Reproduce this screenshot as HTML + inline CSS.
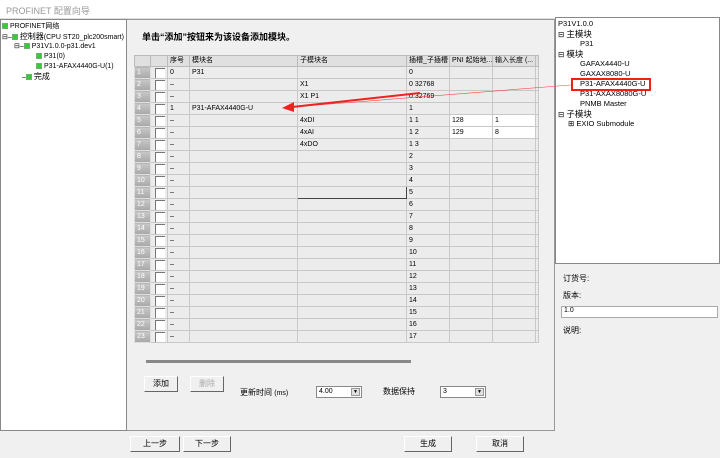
<!DOCTYPE html><html><head><meta charset="utf-8"><style>
*{box-sizing:border-box;margin:0;padding:0}
body{width:720px;height:458px;background:#f0f0f0;font-family:"Liberation Sans","Noto Sans CJK SC",sans-serif;font-size:8px;color:#000;position:relative;overflow:hidden}
.a{position:absolute}
.title{left:0;top:0;width:720px;height:19px;background:#fff;color:#999;font-size:9px;padding:4px 6px;border-bottom:1px solid #ddd}
.lp{left:0;top:19px;width:127px;height:412px;background:#fff;border:1px solid #888}
.rp{left:555px;top:17px;width:165px;height:247px;background:#fff;border:1px solid #888}
.main{left:127px;top:19px;width:428px;height:412px;border:1px solid #999;border-left:none}
.g{display:inline-block;width:6px;height:6px;background:#3c3;border:1px solid #7a7;vertical-align:-1px;margin-right:2px}
table{border-collapse:collapse;table-layout:fixed;position:absolute;left:134px;top:55px;width:404px}
td{height:12px;border:1px solid #c8c8c8;padding:0 2px;font-size:7px;white-space:nowrap;overflow:hidden;background:#ececec;line-height:10px}
tr.h td{height:11px;background:#e0e0e0;border-color:#bbb}
td.rh{background:linear-gradient(#c8c8c8,#a8a8a8);color:#fff;border-color:#ddd}
td.cb span{display:block;width:10px;height:10px;background:#fff;border-left:1px solid #777;border-top:1px solid #777;margin-left:2px}
.btn{background:#f0f0f0;border:1px solid #fff;border-right:1px solid #666;border-bottom:1px solid #666;text-align:center;font-size:8px;line-height:14px;height:16px}
.sel{background:#fff;border:1px solid #888;height:12px;font-size:7px;padding-left:2px;line-height:10px}
.sel b{position:absolute;right:1px;top:1px;width:9px;height:8px;background:#e0e0e0;border:1px solid #999;font-size:5px;text-align:center;line-height:7px}
.t div{white-space:nowrap}
.lp div{font-size:7px;line-height:10px;height:10px}
.rp div{font-size:7.5px;line-height:10px;height:10px}
</style></head><body>
<div class="a title">PROFINET 配置向导</div>
<div class="a lp t" style="padding:2px 1px">
<div><span class="g"></span>PROFINET网络</div>
<div>⊟–<span class="g"></span><span style="font-size:8px">控制器</span>(CPU ST20_plc200smart)</div>
<div style="padding-left:12px">⊟–<span class="g"></span>P31V1.0.0-p31.dev1</div>
<div style="padding-left:34px"><span class="g"></span>P31(0)</div>
<div style="padding-left:34px"><span class="g"></span>P31-AFAX4440G-U(1)</div>
<div style="padding-left:20px">–<span class="g"></span><span style="font-size:8px">完成</span></div>
</div>
<div class="a main"></div>
<div class="a" style="left:142px;top:30px;font-size:9px;font-weight:bold">单击“添加”按钮来为该设备添加模块。</div>
<table>
<colgroup><col style="width:16px"><col style="width:17px"><col style="width:22px"><col style="width:108px"><col style="width:109px"><col style="width:43px"><col style="width:43px"><col style="width:43px"><col style="width:3px"></colgroup>
<tr class="h"><td></td><td></td><td>序号</td><td>模块名</td><td>子模块名</td><td>插槽_子插槽</td><td>PNI 起始地...</td><td>输入长度 (...</td><td></td></tr>
<tr><td class="rh">1</td><td class="cb"><span></span></td><td>0</td><td>P31</td><td></td><td>0</td><td></td><td></td><td></td></tr>
<tr><td class="rh">2</td><td class="cb"><span></span></td><td>–</td><td></td><td>X1</td><td>0 32768</td><td></td><td></td><td></td></tr>
<tr><td class="rh">3</td><td class="cb"><span></span></td><td>–</td><td></td><td>X1 P1</td><td>0 32769</td><td></td><td></td><td></td></tr>
<tr><td class="rh">4</td><td class="cb"><span></span></td><td>1</td><td>P31-AFAX4440G-U</td><td></td><td>1</td><td></td><td></td><td></td></tr>
<tr><td class="rh">5</td><td class="cb"><span></span></td><td>–</td><td></td><td>4xDI</td><td>1 1</td><td style="background:#fff">128</td><td style="background:#fff">1</td><td></td></tr>
<tr><td class="rh">6</td><td class="cb"><span></span></td><td>–</td><td></td><td>4xAI</td><td>1 2</td><td style="background:#fff">129</td><td style="background:#fff">8</td><td></td></tr>
<tr><td class="rh">7</td><td class="cb"><span></span></td><td>–</td><td></td><td>4xDO</td><td>1 3</td><td></td><td></td><td></td></tr>
<tr><td class="rh">8</td><td class="cb"><span></span></td><td>–</td><td></td><td></td><td>2</td><td></td><td></td><td></td></tr>
<tr><td class="rh">9</td><td class="cb"><span></span></td><td>–</td><td></td><td></td><td>3</td><td></td><td></td><td></td></tr>
<tr><td class="rh">10</td><td class="cb"><span></span></td><td>–</td><td></td><td></td><td>4</td><td></td><td></td><td></td></tr>
<tr><td class="rh">11</td><td class="cb"><span></span></td><td>–</td><td></td><td style="border:1px solid #444"></td><td>5</td><td></td><td></td><td></td></tr>
<tr><td class="rh">12</td><td class="cb"><span></span></td><td>–</td><td></td><td></td><td>6</td><td></td><td></td><td></td></tr>
<tr><td class="rh">13</td><td class="cb"><span></span></td><td>–</td><td></td><td></td><td>7</td><td></td><td></td><td></td></tr>
<tr><td class="rh">14</td><td class="cb"><span></span></td><td>–</td><td></td><td></td><td>8</td><td></td><td></td><td></td></tr>
<tr><td class="rh">15</td><td class="cb"><span></span></td><td>–</td><td></td><td></td><td>9</td><td></td><td></td><td></td></tr>
<tr><td class="rh">16</td><td class="cb"><span></span></td><td>–</td><td></td><td></td><td>10</td><td></td><td></td><td></td></tr>
<tr><td class="rh">17</td><td class="cb"><span></span></td><td>–</td><td></td><td></td><td>11</td><td></td><td></td><td></td></tr>
<tr><td class="rh">18</td><td class="cb"><span></span></td><td>–</td><td></td><td></td><td>12</td><td></td><td></td><td></td></tr>
<tr><td class="rh">19</td><td class="cb"><span></span></td><td>–</td><td></td><td></td><td>13</td><td></td><td></td><td></td></tr>
<tr><td class="rh">20</td><td class="cb"><span></span></td><td>–</td><td></td><td></td><td>14</td><td></td><td></td><td></td></tr>
<tr><td class="rh">21</td><td class="cb"><span></span></td><td>–</td><td></td><td></td><td>15</td><td></td><td></td><td></td></tr>
<tr><td class="rh">22</td><td class="cb"><span></span></td><td>–</td><td></td><td></td><td>16</td><td></td><td></td><td></td></tr>
<tr><td class="rh">23</td><td class="cb"><span></span></td><td>–</td><td></td><td></td><td>17</td><td></td><td></td><td></td></tr>
</table>
<div class="a" style="left:146px;top:360px;width:265px;height:3px;background:#888"></div>
<div class="a btn" style="left:144px;top:376px;width:34px">添加</div>
<div class="a btn" style="left:190px;top:376px;width:34px;color:#aaa">删除</div>
<div class="a" style="left:240px;top:387px;font-size:8px">更新时间 <span style="font-size:7px">(ms)</span></div>
<div class="a sel" style="left:316px;top:386px;width:46px">4.00<b>▼</b></div>
<div class="a" style="left:383px;top:386px;font-size:8px">数据保持</div>
<div class="a sel" style="left:440px;top:386px;width:46px">3<b>▼</b></div>
<div class="a btn" style="left:130px;top:436px;width:50px">上一步</div>
<div class="a btn" style="left:183px;top:436px;width:48px">下一步</div>
<div class="a btn" style="left:404px;top:436px;width:48px">生成</div>
<div class="a btn" style="left:476px;top:436px;width:48px">取消</div>
<div class="a rp t" style="padding:1px 2px">
<div>P31V1.0.0</div>
<div>⊟ <span style="font-size:8.5px">主模块</span></div>
<div style="padding-left:22px">P31</div>
<div>⊟ <span style="font-size:8.5px">模块</span></div>
<div style="padding-left:22px">GAFAX4440-U</div>
<div style="padding-left:22px">GAXAX8080-U</div>
<div style="padding-left:22px">P31-AFAX4440G-U</div>
<div style="padding-left:22px">P31-AXAX8080G-U</div>
<div style="padding-left:22px">PNMB Master</div>
<div>⊟ <span style="font-size:8.5px">子模块</span></div>
<div style="padding-left:10px">⊞ EXIO Submodule</div>
</div>
<div class="a" style="left:571px;top:78px;width:80px;height:13px;border:2px solid #e21"></div>
<div class="a" style="left:563px;top:273px;font-size:8px">订货号:</div>
<div class="a" style="left:563px;top:290px;font-size:8px">版本:</div>
<div class="a" style="left:561px;top:306px;width:157px;height:12px;background:#fff;border:1px solid #aaa;font-size:7px;padding-left:2px">1.0</div>
<div class="a" style="left:563px;top:325px;font-size:8px">说明:</div>
<svg class="a" style="left:0;top:0" width="720" height="458"><line x1="571" y1="85" x2="292" y2="107" stroke="#f44" stroke-width="0.6"/><line x1="420" y1="93" x2="292" y2="107" stroke="#e22" stroke-width="2"/><polygon points="282,108 294,102 294,112" fill="#e22"/></svg>
</body></html>
